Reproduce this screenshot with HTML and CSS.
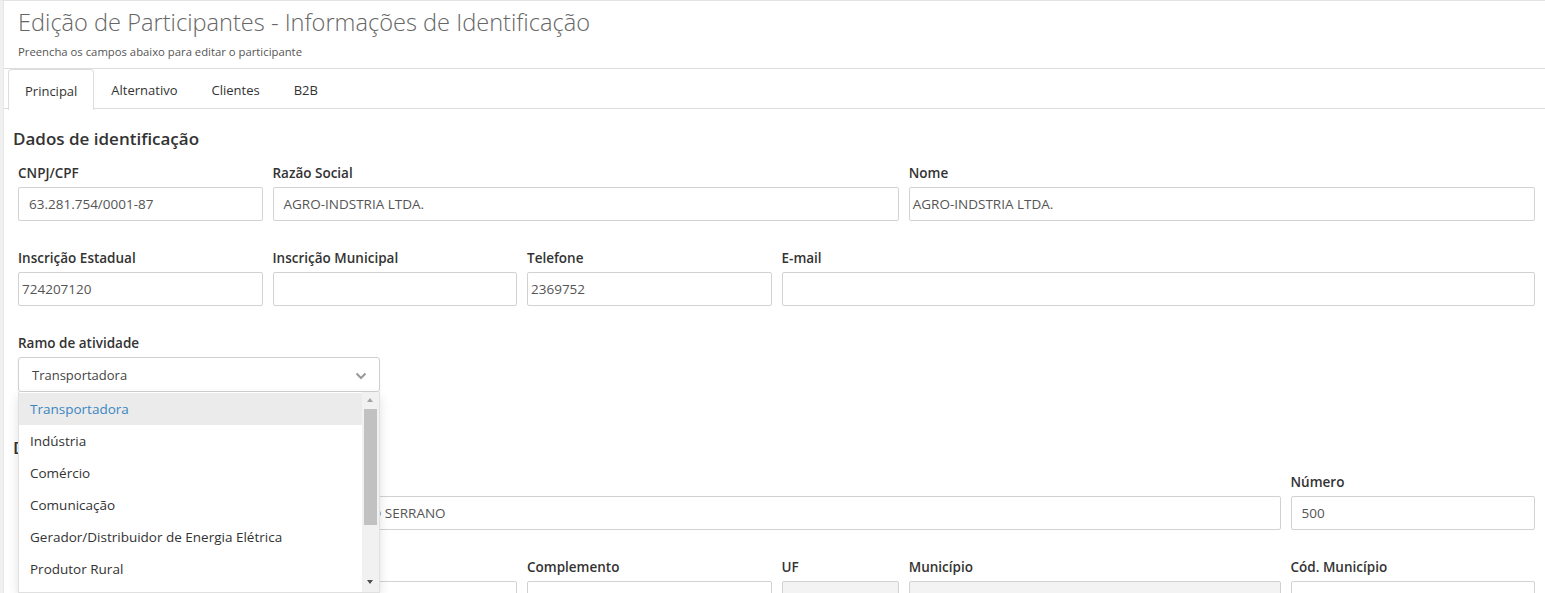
FILE: index.html
```html
<!DOCTYPE html>
<html lang="pt-BR">
<head>
<meta charset="utf-8">
<title>Edição de Participantes</title>
<link rel="stylesheet" href="styles.css">
</head>
<body>
<div class="page">
  <header class="page-header">
    <h1 class="page-title">Edição de Participantes - Informações de Identificação</h1>
    <p class="page-subtitle">Preencha os campos abaixo para editar o participante</p>
  </header>
  <nav class="tabs">
    <a class="tab active">Principal</a>
    <a class="tab">Alternativo</a>
    <a class="tab">Clientes</a>
    <a class="tab">B2B</a>
  </nav>
  <main class="content">
    <h2 class="section-title">Dados de identificação</h2>
    <div class="grid">
      <div class="field span-2"><label>CNPJ/CPF</label><div class="input pad-l">63.281.754/0001-87</div></div>
      <div class="field span-5"><label>Razão Social</label><div class="input pad-l">AGRO-INDSTRIA LTDA.</div></div>
      <div class="field span-5"><label>Nome</label><div class="input pad-s">AGRO-INDSTRIA LTDA.</div></div>

      <div class="field span-2"><label>Inscrição Estadual</label><div class="input pad-s">724207120</div></div>
      <div class="field span-2"><label>Inscrição Municipal</label><div class="input pad-s"></div></div>
      <div class="field span-2"><label>Telefone</label><div class="input pad-s">2369752</div></div>
      <div class="field span-6"><label>E-mail</label><div class="input pad-s"></div></div>

      <div class="field span-12">
        <label>Ramo de atividade</label>
        <div class="select-wrap">
          <div class="select">
            <span>Transportadora</span>
            <svg class="chevron" width="12" height="8" viewBox="0 0 12 8"><path d="M1.5 1.5 L6 6 L10.5 1.5" fill="none" stroke="#999" stroke-width="2"/></svg>
          </div>
          <div class="dropdown">
            <ul class="options">
              <li class="option highlighted">Transportadora</li>
              <li class="option">Indústria</li>
              <li class="option">Comércio</li>
              <li class="option">Comunicação</li>
              <li class="option">Gerador/Distribuidor de Energia Elétrica</li>
              <li class="option">Produtor Rural</li>
              <li class="option">Outros</li>
            </ul>
            <div class="scrollbar">
              <span class="arrow up"></span>
              <span class="thumb"></span>
              <span class="arrow down"></span>
            </div>
          </div>
        </div>
      </div>
    </div>

    <h2 class="section-title">Dados de endereço</h2>
    <div class="grid">
      <div class="field span-10"><label>Logradouro</label><div class="input pad-l">AVENIDA RODOVIA ESTADUAL RS-020 KM - ESTRADA DO SERRANO</div></div>
      <div class="field span-2"><label>Número</label><div class="input pad-l">500</div></div>

      <div class="field span-2"><label>CEP</label><div class="input pad-l"></div></div>
      <div class="field span-2"><label>Bairro</label><div class="input pad-l"></div></div>
      <div class="field span-2"><label>Complemento</label><div class="input pad-l"></div></div>
      <div class="field span-1"><label>UF</label><div class="input pad-l disabled"></div></div>
      <div class="field span-3"><label>Município</label><div class="input pad-l disabled"></div></div>
      <div class="field span-2"><label>Cód. Município</label><div class="input pad-l"></div></div>
    </div>
  </main>
</div>
</body>
</html>
```
FILE: styles.css
```css
* { box-sizing: border-box; }
html, body { margin: 0; padding: 0; background: #fff; }
body {
  font-family: "Open Sans", "Noto Sans", "Liberation Sans", sans-serif;
  color: #333;
  overflow: hidden;
  height: 593px;
}
.page {
  border-top: 1px solid #e3e3e3;
  border-left: 3px solid #f0f0f0;
  height: 593px;
  overflow: hidden;
  position: relative;
}
.page::before {
  content: "";
  position: absolute;
  left: 0; top: 0; bottom: 0;
  width: 1px;
  background: #e6e6e6;
}
.page-header {
  padding: 5px 0 0 15px;
  height: 68px;
  border-bottom: 1px solid #ddd;
}
.page-title {
  margin: 0;
  font-size: 23.6px;
  font-weight: 300;
  color: #666;
  line-height: 32px;
}
.page-subtitle {
  margin: 6px 0 0;
  font-size: 11.3px;
  color: #555;
  line-height: 16px;
}
.tabs {
  display: flex;
  height: 40px;
  border-bottom: 1px solid #ddd;
  padding-left: 5px;
}
.tab {
  display: flex;
  align-items: center;
  padding: 1px 16px 0;
  font-size: 13px;
  color: #333;
  height: 40px;
  border: 1px solid transparent;
  border-bottom: none;
}
.tab.active {
  border-color: #ddd;
  border-top-left-radius: 4px;
  border-top-right-radius: 4px;
  background: #fff;
  height: 41px;
}
.content {
  padding: 0 10px 0 10px;
}
.section-title {
  margin: 16px 0 12px;
  font-size: 17px;
  font-weight: 600;
  color: #333;
  line-height: 27px;
}
.grid {
  display: grid;
  grid-template-columns: repeat(12, 1fr);
  column-gap: 10px;
  row-gap: 28px;
  padding-left: 5px;
  margin-bottom: 42px;
}
.span-1 { grid-column: span 1; }
.span-2 { grid-column: span 2; }
.span-3 { grid-column: span 3; }
.span-5 { grid-column: span 5; }
.span-6 { grid-column: span 6; }
.span-10 { grid-column: span 10; }
.span-12 { grid-column: span 12; }
.field label {
  display: block;
  font-size: 13.5px;
  font-weight: 600;
  color: #333;
  line-height: 19px;
  margin-bottom: 4px;
}
.input {
  height: 34px;
  border: 1px solid #d2d2d2;
  border-radius: 2px;
  font-size: 13.5px;
  color: #555;
  display: flex;
  align-items: center;
  white-space: nowrap;
  overflow: hidden;
}
.input.pad-l { padding-left: 10px; }
.input.pad-s { padding-left: 3px; }
.input.disabled { background: #f3f3f3; }
.select-wrap {
  position: relative;
  width: 362px;
}
.select {
  height: 35px;
  border: 1px solid #d0d0d0;
  border-radius: 3px;
  box-shadow: 0 1px 2px rgba(0,0,0,0.08);
  display: flex;
  align-items: center;
  justify-content: space-between;
  padding: 0 12px 0 13px;
  font-size: 13px;
  color: #444;
}
.chevron { margin-top: 3px; }
.dropdown {
  position: absolute;
  left: 0;
  top: 35px;
  width: 362px;
  height: 201px;
  background: #fff;
  border: 1px solid #e0e0e0;
  border-top: none;
  box-shadow: 0 4px 10px rgba(0,0,0,0.12);
  overflow: hidden;
  z-index: 10;
}
.options {
  list-style: none;
  margin: 1px 17px 0 0;
  padding: 0;
}
.option {
  height: 32px;
  line-height: 32px;
  padding-left: 11px;
  font-size: 13.5px;
  color: #333;
  white-space: nowrap;
}
.option.highlighted {
  background: #ebebeb;
  color: #3b86c0;
}
.scrollbar {
  position: absolute;
  right: 0;
  top: 0;
  width: 17px;
  height: 100%;
  background: #f1f1f1;
}
.thumb {
  position: absolute;
  left: 2px;
  top: 17px;
  width: 13px;
  height: 116px;
  background: #c1c1c1;
}
.arrow {
  position: absolute;
  left: 5px;
  width: 0; height: 0;
  border-left: 3.5px solid transparent;
  border-right: 3.5px solid transparent;
}
.arrow.up { top: 6px; border-bottom: 4px solid #a3a3a3; }
.arrow.down { bottom: 8px; border-top: 4px solid #505050; }
```
